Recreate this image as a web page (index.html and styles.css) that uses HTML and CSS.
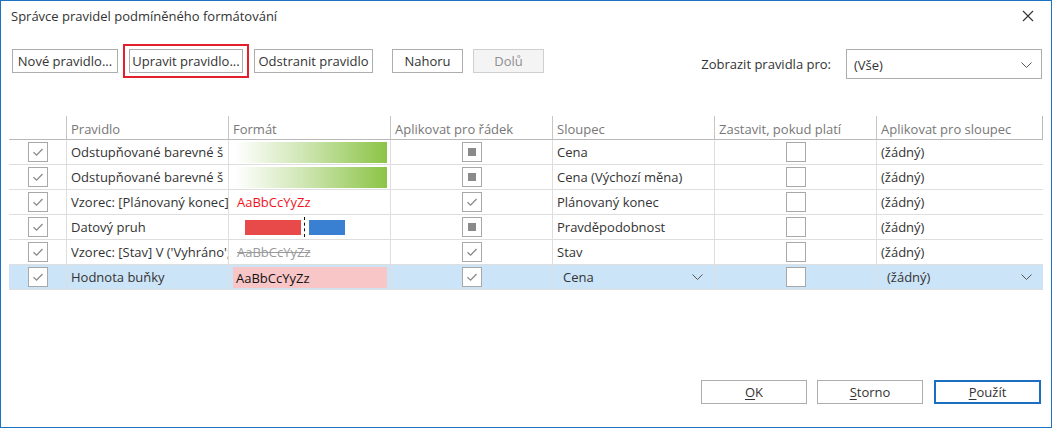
FILE: index.html
```html
<!DOCTYPE html>
<html lang="cs">
<head>
<meta charset="utf-8">
<title>Správce pravidel podmíněného formátování</title>
<link rel="stylesheet" href="styles.css">
</head>
<body>
<div class="window">
  <div class="titlebar">
    <span class="title">Správce pravidel podmíněného formátování</span>
    <svg class="close" width="12" height="12" viewBox="0 0 12 12"><path d="M1 1L11 11M11 1L1 11" stroke="#333" stroke-width="1.1" fill="none"/></svg>
  </div>

  <div class="toolbar">
    <button class="btn w-new">Nové pravidlo...</button>
    <div class="focus-ring"><button class="btn w-edit">Upravit pravidlo...</button></div>
    <button class="btn w-del">Odstranit pravidlo</button>
    <button class="btn w-up">Nahoru</button>
    <button class="btn w-down disabled">Dolů</button>
    <span class="show-label">Zobrazit pravidla pro:</span>
    <div class="select">
      <span>(Vše)</span>
      <svg class="chev" width="11" height="6" viewBox="0 0 11 6"><path d="M0.5 0.5L5.5 5.5L10.5 0.5" stroke="#555" stroke-width="1" fill="none"/></svg>
    </div>
  </div>

  <div class="grid">
    <div class="hd c0"></div>
    <div class="hd">Pravidlo</div>
    <div class="hd">Formát</div>
    <div class="hd">Aplikovat pro řádek</div>
    <div class="hd">Sloupec</div>
    <div class="hd">Zastavit, pokud platí</div>
    <div class="hd last">Aplikovat pro sloupec</div>

    <!-- row 1 -->
    <div class="cell c0 center"><span class="cb"><svg viewBox="0 0 18 18"><path d="M4.5 9.2L7.6 12.2L13.5 6" stroke="#8a8a8a" stroke-width="1.3" fill="none"/></svg></span></div>
    <div class="cell txt"><span class="clip">Odstupňované barevné škály</span></div>
    <div class="cell fmt"><span class="grad"></span></div>
    <div class="cell center"><span class="cb"><span class="ind"></span></span></div>
    <div class="cell txt">Cena</div>
    <div class="cell center"><span class="cb"></span></div>
    <div class="cell txt">(žádný)</div>

    <!-- row 2 -->
    <div class="cell c0 center"><span class="cb"><svg viewBox="0 0 18 18"><path d="M4.5 9.2L7.6 12.2L13.5 6" stroke="#8a8a8a" stroke-width="1.3" fill="none"/></svg></span></div>
    <div class="cell txt"><span class="clip">Odstupňované barevné škály</span></div>
    <div class="cell fmt"><span class="grad"></span></div>
    <div class="cell center"><span class="cb"><span class="ind"></span></span></div>
    <div class="cell txt">Cena (Výchozí měna)</div>
    <div class="cell center"><span class="cb"></span></div>
    <div class="cell txt">(žádný)</div>

    <!-- row 3 -->
    <div class="cell c0 center"><span class="cb"><svg viewBox="0 0 18 18"><path d="M4.5 9.2L7.6 12.2L13.5 6" stroke="#8a8a8a" stroke-width="1.3" fill="none"/></svg></span></div>
    <div class="cell txt"><span class="clip wide">Vzorec: [Plánovaný konec] &lt; Dnes()</span></div>
    <div class="cell fmt"><span class="sample red">AaBbCcYyZz</span></div>
    <div class="cell center"><span class="cb"><svg viewBox="0 0 18 18"><path d="M4.5 9.2L7.6 12.2L13.5 6" stroke="#8a8a8a" stroke-width="1.3" fill="none"/></svg></span></div>
    <div class="cell txt">Plánovaný konec</div>
    <div class="cell center"><span class="cb"></span></div>
    <div class="cell txt">(žádný)</div>

    <!-- row 4 -->
    <div class="cell c0 center"><span class="cb"><svg viewBox="0 0 18 18"><path d="M4.5 9.2L7.6 12.2L13.5 6" stroke="#8a8a8a" stroke-width="1.3" fill="none"/></svg></span></div>
    <div class="cell txt">Datový pruh</div>
    <div class="cell fmt databar"><span class="neg"></span><span class="axis"></span><span class="pos"></span></div>
    <div class="cell center"><span class="cb"><span class="ind"></span></span></div>
    <div class="cell txt">Pravděpodobnost</div>
    <div class="cell center"><span class="cb"></span></div>
    <div class="cell txt">(žádný)</div>

    <!-- row 5 -->
    <div class="cell c0 center"><span class="cb"><svg viewBox="0 0 18 18"><path d="M4.5 9.2L7.6 12.2L13.5 6" stroke="#8a8a8a" stroke-width="1.3" fill="none"/></svg></span></div>
    <div class="cell txt"><span class="clip wide">Vzorec: [Stav] V ('Vyhráno'; 'Prohráno')</span></div>
    <div class="cell fmt"><span class="sample strike">AaBbCcYyZz</span></div>
    <div class="cell center"><span class="cb"><svg viewBox="0 0 18 18"><path d="M4.5 9.2L7.6 12.2L13.5 6" stroke="#8a8a8a" stroke-width="1.3" fill="none"/></svg></span></div>
    <div class="cell txt">Stav</div>
    <div class="cell center"><span class="cb"></span></div>
    <div class="cell txt">(žádný)</div>

    <!-- row 6 selected -->
    <div class="cell sel c0 center"><span class="cb"><svg viewBox="0 0 18 18"><path d="M4.5 9.2L7.6 12.2L13.5 6" stroke="#8a8a8a" stroke-width="1.3" fill="none"/></svg></span></div>
    <div class="cell sel txt">Hodnota buňky</div>
    <div class="cell sel fmt"><span class="pink">AaBbCcYyZz</span></div>
    <div class="cell sel center"><span class="cb white"><svg viewBox="0 0 18 18"><path d="M4.5 9.2L7.6 12.2L13.5 6" stroke="#8a8a8a" stroke-width="1.3" fill="none"/></svg></span></div>
    <div class="cell sel dd"><span>Cena</span><svg class="chev" width="11" height="6" viewBox="0 0 11 6"><path d="M0.5 0.5L5.5 5.5L10.5 0.5" stroke="#555" stroke-width="1" fill="none"/></svg></div>
    <div class="cell sel center"><span class="cb white"></span></div>
    <div class="cell sel dd"><span>(žádný)</span><svg class="chev" width="11" height="6" viewBox="0 0 11 6"><path d="M0.5 0.5L5.5 5.5L10.5 0.5" stroke="#555" stroke-width="1" fill="none"/></svg></div>
  </div>

  <div class="footer">
    <button class="btn fbtn"><u>O</u>K</button>
    <button class="btn fbtn"><u>S</u>torno</button>
    <button class="btn fbtn primary"><u>P</u>oužít</button>
  </div>
</div>
</body>
</html>
```

FILE: styles.css
```css
* { box-sizing: border-box; }
html, body { margin: 0; padding: 0; background: #fff; }
body {
  font-family: "Open Sans", "Noto Sans", sans-serif;
  font-size: 13px;
  color: #333;
}
.window {
  width: 1052px;
  height: 428px;
  border: 1px solid #1d72c2;
  display: flex;
  flex-direction: column;
  background: #fff;
  overflow: hidden;
}
.titlebar {
  height: 30px;
  display: flex;
  align-items: center;
  padding-left: 10px;
  padding-right: 17px;
}
.title { flex: 1; color: #333; }
.close { display: block; }

.toolbar {
  display: flex;
  align-items: flex-start;
  margin-top: 13px;
  padding-left: 11px;
  padding-right: 9px;
  height: 35px;
}
.btn {
  font-family: inherit;
  font-size: inherit;
  color: #333;
  background: #fff;
  border: 1px solid #adadad;
  height: 24px;
  padding: 0;
  margin: 0;
  text-align: center;
  line-height: 21px;
  white-space: nowrap;
}
.toolbar > .btn { margin-top: 5px; }
.w-new { width: 106px; }
.focus-ring {
  margin-left: 5px;
  border: 2px solid #e0202b;
  padding: 3px 4px;
  height: 34px;
}
.w-edit { width: 114px; display: block; }
.w-del { width: 119px; margin-left: 5px; }
.w-up { width: 71px; margin-left: 19px; }
.w-down { width: 71px; margin-left: 10px; }
.btn.disabled { background: #f4f4f4; border-color: #cfcfcf; color: #8f8f8f; }
.show-label {
  margin-left: auto;
  margin-top: 5px;
  line-height: 31px;
  color: #333;
}
.select {
  margin-left: 15px;
  margin-top: 5px;
  width: 196px;
  height: 30px;
  border: 1px solid #adadad;
  display: flex;
  align-items: center;
  justify-content: space-between;
  padding-left: 7px;
  padding-right: 9px;
  padding-top: 1px;
}
.chev { display: block; }

.grid {
  margin-top: 37px;
  margin-left: 8px;
  width: 1034px;
  display: grid;
  grid-template-columns: 57px 162px 162px 162px 162px 162px 167px;
  grid-auto-rows: 25px;
  grid-template-rows: 24px;
}
.hd {
  border-bottom: 1px solid #b9b9b9;
  border-left: 1px solid #c6c6c6;
  color: #777;
  padding-left: 4px;
  line-height: 26px;
  white-space: nowrap;
  overflow: hidden;
}
.hd.c0 { border-left: none; }
.hd.last { border-right: 1px solid #b9b9b9; }
.cell {
  border-bottom: 1px solid #dedede;
  border-left: 1px solid #dedede;
  white-space: nowrap;
  overflow: hidden;
  line-height: 25px;
  color: #333;
}
.cell.c0 { border-left: none; }
.cell.txt { padding-left: 4px; }
.clip { display: block; width: 152px; overflow: hidden; white-space: nowrap; }
.clip.wide { width: 157px; }
.center { display: flex; align-items: center; justify-content: center; }
.cb {
  width: 20px;
  height: 20px;
  border: 1px solid #a8a8a8;
  background: #fff;
  display: flex;
  align-items: center;
  justify-content: center;
}
.cb svg { width: 18px; height: 18px; display: block; }
.ind { width: 8px; height: 8px; background: #8a8a8a; }
.fmt { padding-left: 6px; display: flex; align-items: center; }
.grad {
  width: 152px;
  height: 21px;
  background: linear-gradient(to right, #ffffff 0%, #cfe6b4 45%, #8cc446 100%);
}
.sample { padding-left: 2px; line-height: 25px; }
.red { color: #f0141e; }
.strike { color: #9a9a9a; text-decoration: line-through; }
.databar { padding-left: 16px; }
.neg { width: 56px; height: 15px; background: #e84a4a; }
.axis { width: 0; height: 20px; border-left: 1px dashed #111; margin-left: 3px; margin-right: 4px; }
.pos { width: 36px; height: 15px; background: #3a80d2; }

.sel { background: #cce4f7; }
.sel .pink {
  display: block;
  width: 154px;
  height: 21px;
  line-height: 22px;
  background: #f8c6c6;
  color: #111;
  padding-left: 3px;
}
.sel.fmt { padding-left: 4px; }
.dd {
  display: flex;
  align-items: center;
  justify-content: space-between;
  padding-left: 10px;
  padding-right: 11px;
}
.dd span { line-height: 27px; }

.footer {
  margin-top: auto;
  display: flex;
  justify-content: flex-end;
  padding-right: 10px;
  padding-bottom: 23px;
}
.fbtn { width: 106px; margin-left: 10px; }
.fbtn.primary { width: 107px; margin-left: 11px; border: 2px solid #1a6fc0; line-height: 20px; }
.fbtn u { text-decoration: underline; text-underline-offset: 2px; }
```
